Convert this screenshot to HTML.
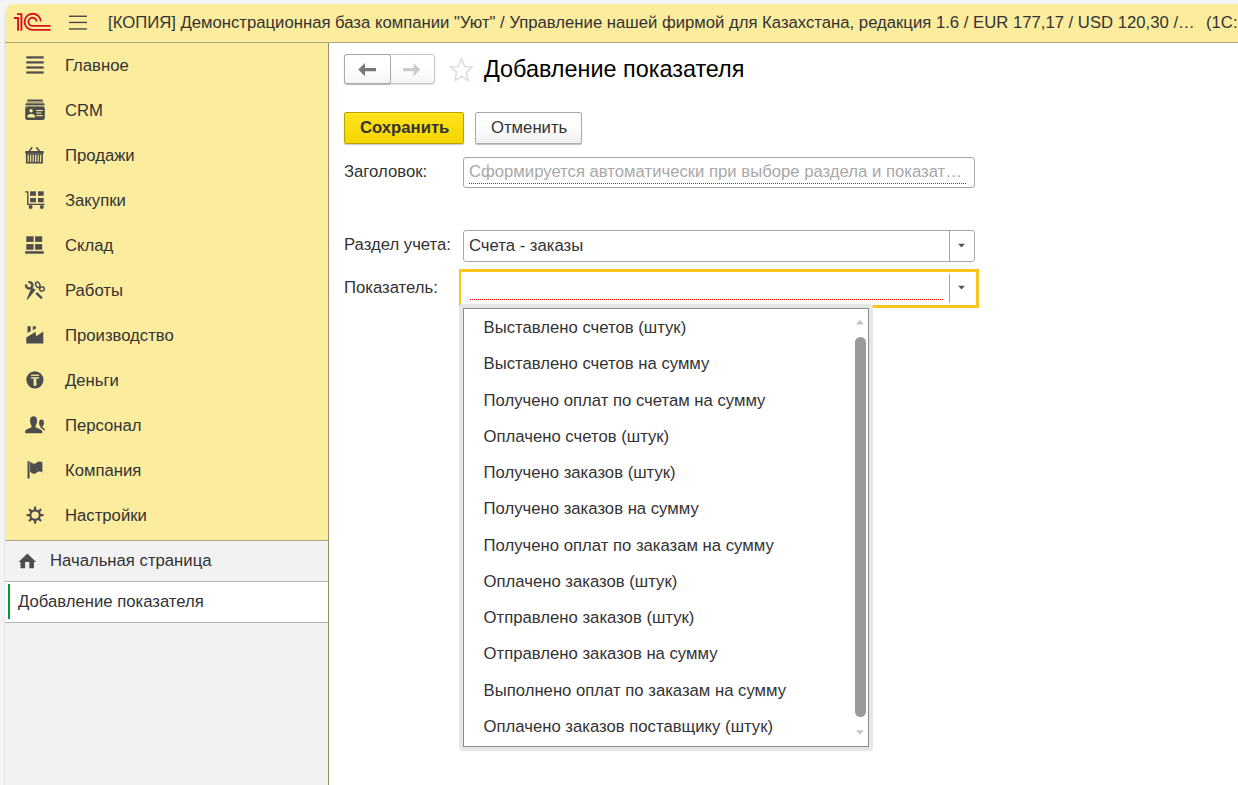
<!DOCTYPE html>
<html><head><meta charset="utf-8">
<style>
*{box-sizing:border-box;margin:0;padding:0}
html,body{width:1238px;height:785px;overflow:hidden}
body{background:#f4f4f4;font-family:"Liberation Sans",sans-serif;font-size:16.7px;line-height:20px;color:#333;position:relative}
.a{position:absolute;white-space:nowrap}
#frame{position:absolute;left:4px;top:4px;width:1234px;height:781px;background:#fff;border-top-left-radius:9px;overflow:hidden;border-left:1px solid #e6e7ee}
#hdr{position:absolute;left:0;top:0;width:1234px;height:39px;background:#fbec9e;border-bottom:1px solid #a9a47c}
#side{position:absolute;left:0;top:39px;width:324px;height:742px;background:#f2f2f2;border-right:1px solid #96916b}
#sec{position:absolute;left:0;top:0;width:323px;height:498px;background:#fbec9e;border-bottom:1px solid #aaa68a}
#ov{position:absolute;left:0;top:0}
.btn{position:absolute;border-radius:3px}
.it{position:absolute;left:483.6px;white-space:nowrap}
</style></head><body>
<div id="frame">
  <div id="hdr"></div>
  <div id="side">
    <div id="sec"></div>
    <div class="a" style="left:0;top:498px;width:323px;height:41px;border-bottom:1px solid #b3b3b3"></div>
    <div class="a" style="left:0;top:539px;width:323px;height:41px;background:#fff;border-bottom:1px solid #b3b3b3">
      <div class="a" style="left:3px;top:2px;width:2px;height:35px;background:#03973c"></div>
    </div>
  </div>
</div>

<!-- header text -->
<div class="a" style="left:108px;top:13px">[КОПИЯ] Демонстрационная база компании "Уют" / Управление нашей фирмой для Казахстана, редакция 1.6 / EUR 177,17 / USD 120,30 /…</div>
<div class="a" style="left:1206px;top:13px">(1С:Предприятие)</div>

<!-- sidebar text -->
<div class="a" style="left:65px;top:56px">Главное</div>
<div class="a" style="left:65px;top:101px">CRM</div>
<div class="a" style="left:65px;top:146px">Продажи</div>
<div class="a" style="left:65px;top:191px">Закупки</div>
<div class="a" style="left:65px;top:236px">Склад</div>
<div class="a" style="left:65px;top:281px">Работы</div>
<div class="a" style="left:65px;top:326px">Производство</div>
<div class="a" style="left:65px;top:371px">Деньги</div>
<div class="a" style="left:65px;top:416px">Персонал</div>
<div class="a" style="left:65px;top:461px">Компания</div>
<div class="a" style="left:65px;top:506px">Настройки</div>
<div class="a" style="left:50px;top:551px">Начальная страница</div>
<div class="a" style="left:18px;top:592px">Добавление показателя</div>

<!-- main -->
<div class="btn" style="left:344px;top:54px;width:91px;height:30px;border:1px solid #c4c4c4;background:linear-gradient(#fff 40%,#f5f5f5);box-shadow:0 1px 1px rgba(0,0,0,.12)"></div>
<div class="btn" style="left:344px;top:54px;width:47px;height:30px;border:1px solid #a9a9a9;background:linear-gradient(#fff 40%,#f5f5f5);box-shadow:0 1px 1px rgba(0,0,0,.2)"></div>
<div class="a" style="left:484px;top:55px;font-size:23.4px;line-height:28px;color:#000">Добавление показателя</div>

<div class="btn" style="left:344px;top:112px;width:120px;height:32px;border:1px solid #b9a300;border-radius:2px;background:linear-gradient(#ffe31c,#f4d600);box-shadow:0 1px 1px rgba(0,0,0,.2)"></div>
<div class="a" style="left:360px;top:118px;font-weight:bold;color:#333">Сохранить</div>
<div class="btn" style="left:475px;top:112px;width:107px;height:32px;border:1px solid #ababab;border-radius:2px;background:linear-gradient(#fff 35%,#f0f0f0);box-shadow:0 1px 1px rgba(0,0,0,.25)"></div>
<div class="a" style="left:491px;top:118px">Отменить</div>

<div class="a" style="left:344px;top:162px">Заголовок:</div>
<div class="btn" style="left:463px;top:157px;width:512px;height:31px;border:1px solid #a6a6a6;background:#fff"></div>
<div class="a" style="left:469px;top:162px;color:#a8a8a8">Сформируется автоматически при выборе раздела и показат…</div>
<div class="a" style="left:469px;top:183px;width:498px;height:1px;background-image:linear-gradient(90deg,#f00 50%,transparent 50%);background-size:2px 1px"></div>

<div class="a" style="left:344px;top:235px">Раздел учета:</div>
<div class="btn" style="left:463px;top:230px;width:512px;height:32px;border:1px solid #a6a6a6;background:#fff"></div>
<div class="a" style="left:949px;top:231px;width:1px;height:30px;background:#a6a6a6"></div>
<div class="a" style="left:469px;top:236px">Счета - заказы</div>

<div class="a" style="left:344px;top:278px">Показатель:</div>
<div class="a" style="left:459px;top:269px;width:520px;height:39px;border:3px solid #f8c61d;border-left-width:2px;background:#fff"></div>
<div class="a" style="left:949px;top:274px;width:1px;height:29px;background:#a6a6a6"></div>
<div class="a" style="left:470px;top:299px;width:474px;height:1px;background-image:linear-gradient(90deg,#f00 50%,transparent 50%);background-size:2px 1px"></div>

<!-- dropdown -->
<div class="a" style="left:459px;top:304px;width:414px;height:447px;background:#e6e6e6;border-radius:4px"></div>
<div class="a" style="left:463px;top:308px;width:406px;height:439px;background:#fff;border:1px solid #8a8a8a"></div>
<div class="a" style="left:855px;top:337px;width:11px;height:380px;background:#9a9a9a;border-radius:5.5px"></div>
<div class="it" style="top:318px">Выставлено счетов (штук)</div>
<div class="it" style="top:354px">Выставлено счетов на сумму</div>
<div class="it" style="top:391px">Получено оплат по счетам на сумму</div>
<div class="it" style="top:427px">Оплачено счетов (штук)</div>
<div class="it" style="top:463px">Получено заказов (штук)</div>
<div class="it" style="top:499px">Получено заказов на сумму</div>
<div class="it" style="top:536px">Получено оплат по заказам на сумму</div>
<div class="it" style="top:572px">Оплачено заказов (штук)</div>
<div class="it" style="top:608px">Отправлено заказов (штук)</div>
<div class="it" style="top:644px">Отправлено заказов на сумму</div>
<div class="it" style="top:681px">Выполнено оплат по заказам на сумму</div>
<div class="it" style="top:717px">Оплачено заказов поставщику (штук)</div>

<svg id="ov" width="1238" height="785" viewBox="0 0 1238 785">
  <!-- 1C logo -->
  <g fill="none" stroke="#d7141e" stroke-width="1.9">
    <path d="M14 18H18.1V30.8M17 14.1H21.4V30.8"/>
    <path d="M40.8 21.5A8.1 8.1 0 1 0 32.7 29.9H50.6"/>
    <path d="M36.6 21.5A4.1 4.1 0 1 0 32.7 25.9H50.6"/>
  </g>
  <!-- hamburger -->
  <g fill="#3f3f3f"><rect x="69" y="15.6" width="18" height="1.3"/><rect x="69" y="21.8" width="18" height="1.3"/><rect x="69" y="28.3" width="18" height="1.3"/></g>
  <g fill="#4d4d4d">
    <!-- Главное -->
    <rect x="26.3" y="56.3" width="17.4" height="2.2"/><rect x="26.3" y="61.3" width="17.4" height="2.2"/><rect x="26.3" y="66.4" width="17.4" height="2.2"/><rect x="26.3" y="71.4" width="17.4" height="2.2"/>
  </g>
  <g fill="#4d4d4d">
    <!-- CRM -->
    <path d="M27.4 100.5H42.6L44.6 104.2V106.4H25.4V104.2Z" opacity="0.38"/><rect x="27.3" y="99.6" width="15.4" height="1.6" rx="0.6"/>
    <rect x="25.6" y="103.6" width="18.8" height="1.5" rx="0.7"/>
    <rect x="25.2" y="106.4" width="19.6" height="13.5" rx="2"/>
    <!-- basket -->
    <path d="M29.2 151.3L32.2 147.3M36.4 147.3L39.5 151.3" stroke="#4d4d4d" stroke-width="1.5" fill="none"/>
    <rect x="25.2" y="151" width="18.5" height="2.8" rx="0.6"/>
    <path d="M25.9 153.6H42.9V163.5H25.9Z"/>
    <!-- cart -->
    <path d="M25.2 191.9H27.8V204.4H44.8" stroke="#4d4d4d" stroke-width="1.4" fill="none"/>
    <rect x="30.1" y="191.3" width="5.8" height="4.5"/><rect x="38" y="191.3" width="5.7" height="4.5"/>
    <rect x="30.1" y="198" width="5.8" height="4.3"/><rect x="38" y="198" width="5.7" height="4.3"/>
    <circle cx="30.6" cy="207.1" r="2"/><circle cx="41.8" cy="207.1" r="2"/>
    <!-- sklad -->
    <rect x="26.3" y="236.3" width="7.3" height="5.6"/><rect x="35.1" y="236.3" width="7.1" height="5.6"/>
    <rect x="26.3" y="244.1" width="7.3" height="5.6"/><rect x="35.1" y="244.1" width="7.1" height="5.6"/>
    <rect x="25.2" y="251.2" width="18.5" height="2.5"/>
    <!-- raboty -->
    <path d="M28.4 282.2A3.2 3.2 0 1 1 26.1 284.6" stroke="#4d4d4d" stroke-width="2.4" fill="none"/>
    <path d="M31.6 287.4L35.6 289.8L27.6 299.6L26.5 299.4Z"/>
    <ellipse cx="37.8" cy="284.8" rx="2" ry="2.9" transform="rotate(-25 37.8 284.8)" stroke="#4d4d4d" stroke-width="1.5" fill="none"/>
    <ellipse cx="42" cy="289" rx="2.4" ry="2" transform="rotate(-25 42 289)" stroke="#4d4d4d" stroke-width="1.5" fill="none"/>
    <path d="M37 293.6L41.2 297.6" stroke="#4d4d4d" stroke-width="2.5" stroke-linecap="round"/>
    <!-- proizvodstvo -->
    <path d="M27.5 326.3H30.7V331.3L27.5 333Z"/>
    <path d="M32.8 326.3H35.9V328.6L32.8 330.3Z"/>
    <path d="M26.3 337.4L35.5 331.8L36.2 336.2L43.3 331.5V343.5H26.3Z"/>
    <!-- dengi -->
    <circle cx="34.9" cy="379.8" r="8.6"/>
    <!-- personal -->
    <path d="M25.2 433.3V431.6C25.2 429.6 28.3 428.6 31.6 427.3V425.6C30.6 424.6 30.1 423 30.1 420.2C30.1 417.6 31.5 416.3 33.55 416.3C35.6 416.3 37 417.6 37 420.2C37 423 36.5 424.6 35.5 425.6V427.3C38.8 428.6 42.2 429.6 42.2 431.6V433.3Z"/>
    <ellipse cx="41.5" cy="423" rx="2.4" ry="3.4"/>
    <path d="M40.2 426L41.9 426.2L44.9 429.3L44.6 430.8L40.5 427.5Z"/>
    <!-- kompaniya -->
    <rect x="27.5" y="461.3" width="2.1" height="17.2"/>
    <path d="M30.1 461.5C32 463.4 34 464.6 36.2 462.9C38.6 461 41 461 42.4 462.4V472.6C41 471.2 38.6 471 36.2 472.9C34 474.6 32 473.6 30.1 471.8Z"/>
    <!-- nastroyki -->
    <circle cx="35.1" cy="515.1" r="4.7" fill="none" stroke="#4d4d4d" stroke-width="2.0"/>
    <path d="M33.7 510.2L34.2 506.5H36L36.5 510.2Z" transform="rotate(0 35.1 515.1)"/><path d="M33.7 510.2L34.2 506.5H36L36.5 510.2Z" transform="rotate(45 35.1 515.1)"/><path d="M33.7 510.2L34.2 506.5H36L36.5 510.2Z" transform="rotate(90 35.1 515.1)"/><path d="M33.7 510.2L34.2 506.5H36L36.5 510.2Z" transform="rotate(135 35.1 515.1)"/><path d="M33.7 510.2L34.2 506.5H36L36.5 510.2Z" transform="rotate(180 35.1 515.1)"/><path d="M33.7 510.2L34.2 506.5H36L36.5 510.2Z" transform="rotate(225 35.1 515.1)"/><path d="M33.7 510.2L34.2 506.5H36L36.5 510.2Z" transform="rotate(270 35.1 515.1)"/><path d="M33.7 510.2L34.2 506.5H36L36.5 510.2Z" transform="rotate(315 35.1 515.1)"/>
    <!-- home -->
    <path d="M27.4 553.6L36.1 561.9H33.9V568.3H29.3V561.9H25.1V568.3H20.5V561.9H18.6Z"/>
  </g>
  <g fill="#fbec9e">
    <circle cx="31.1" cy="110.7" r="1.7"/>
    <path d="M27.5 117.6V116.3C27.5 114.9 29 114.1 31.2 114.1C33.4 114.1 34.9 114.9 34.9 116.3V117.6Z"/>
    <rect x="36.2" y="110" width="6.7" height="1.1"/><rect x="36.2" y="112.5" width="5" height="1.1"/><rect x="36.2" y="115.1" width="6.7" height="1.1"/>
    <rect x="27.6" y="154.7" width="1.15" height="7.2"/><rect x="30.1" y="154.7" width="1.15" height="7.2"/><rect x="32.6" y="154.7" width="1.15" height="7.2"/><rect x="35.1" y="154.7" width="1.15" height="7.2"/><rect x="37.6" y="154.7" width="1.15" height="7.2"/><rect x="40.1" y="154.7" width="1.15" height="7.2"/>
    <rect x="31.1" y="374.6" width="8" height="1.3"/><rect x="31.1" y="377.2" width="8" height="1.4"/><rect x="33.6" y="378.5" width="2.8" height="7.3"/>
  </g>
  <!-- back/forward arrows -->
  <path d="M358.3 69.6L365 63V67.9H376V71.3H365V76.3Z" fill="#777"/>
  <path d="M420.3 69.6L413.6 63V67.9H403V71.3H413.6V76.3Z" fill="#ccc"/>
  <!-- star -->
  <path d="M461.5 58.6L464.8 66.5L472.4 66.9L466.4 72.4L468 80.7L461.5 76.1L455 80.7L456.6 72.4L450.6 66.9L458.2 66.5Z" fill="none" stroke="#dfdfdf" stroke-width="1.7" stroke-linejoin="round"/>
  <!-- dropdown arrows -->
  <path d="M958 243.8H965L961.5 247.6Z" fill="#555"/>
  <path d="M958 285.8H965L961.5 289.6Z" fill="#555"/>
  <!-- scroll arrows -->
  <path d="M856 324.4H863.7L859.9 319.8Z" fill="#c4c4c4"/>
  <path d="M856 730.2H863.7L859.9 734.8Z" fill="#c4c4c4"/>
</svg>
</body></html>
